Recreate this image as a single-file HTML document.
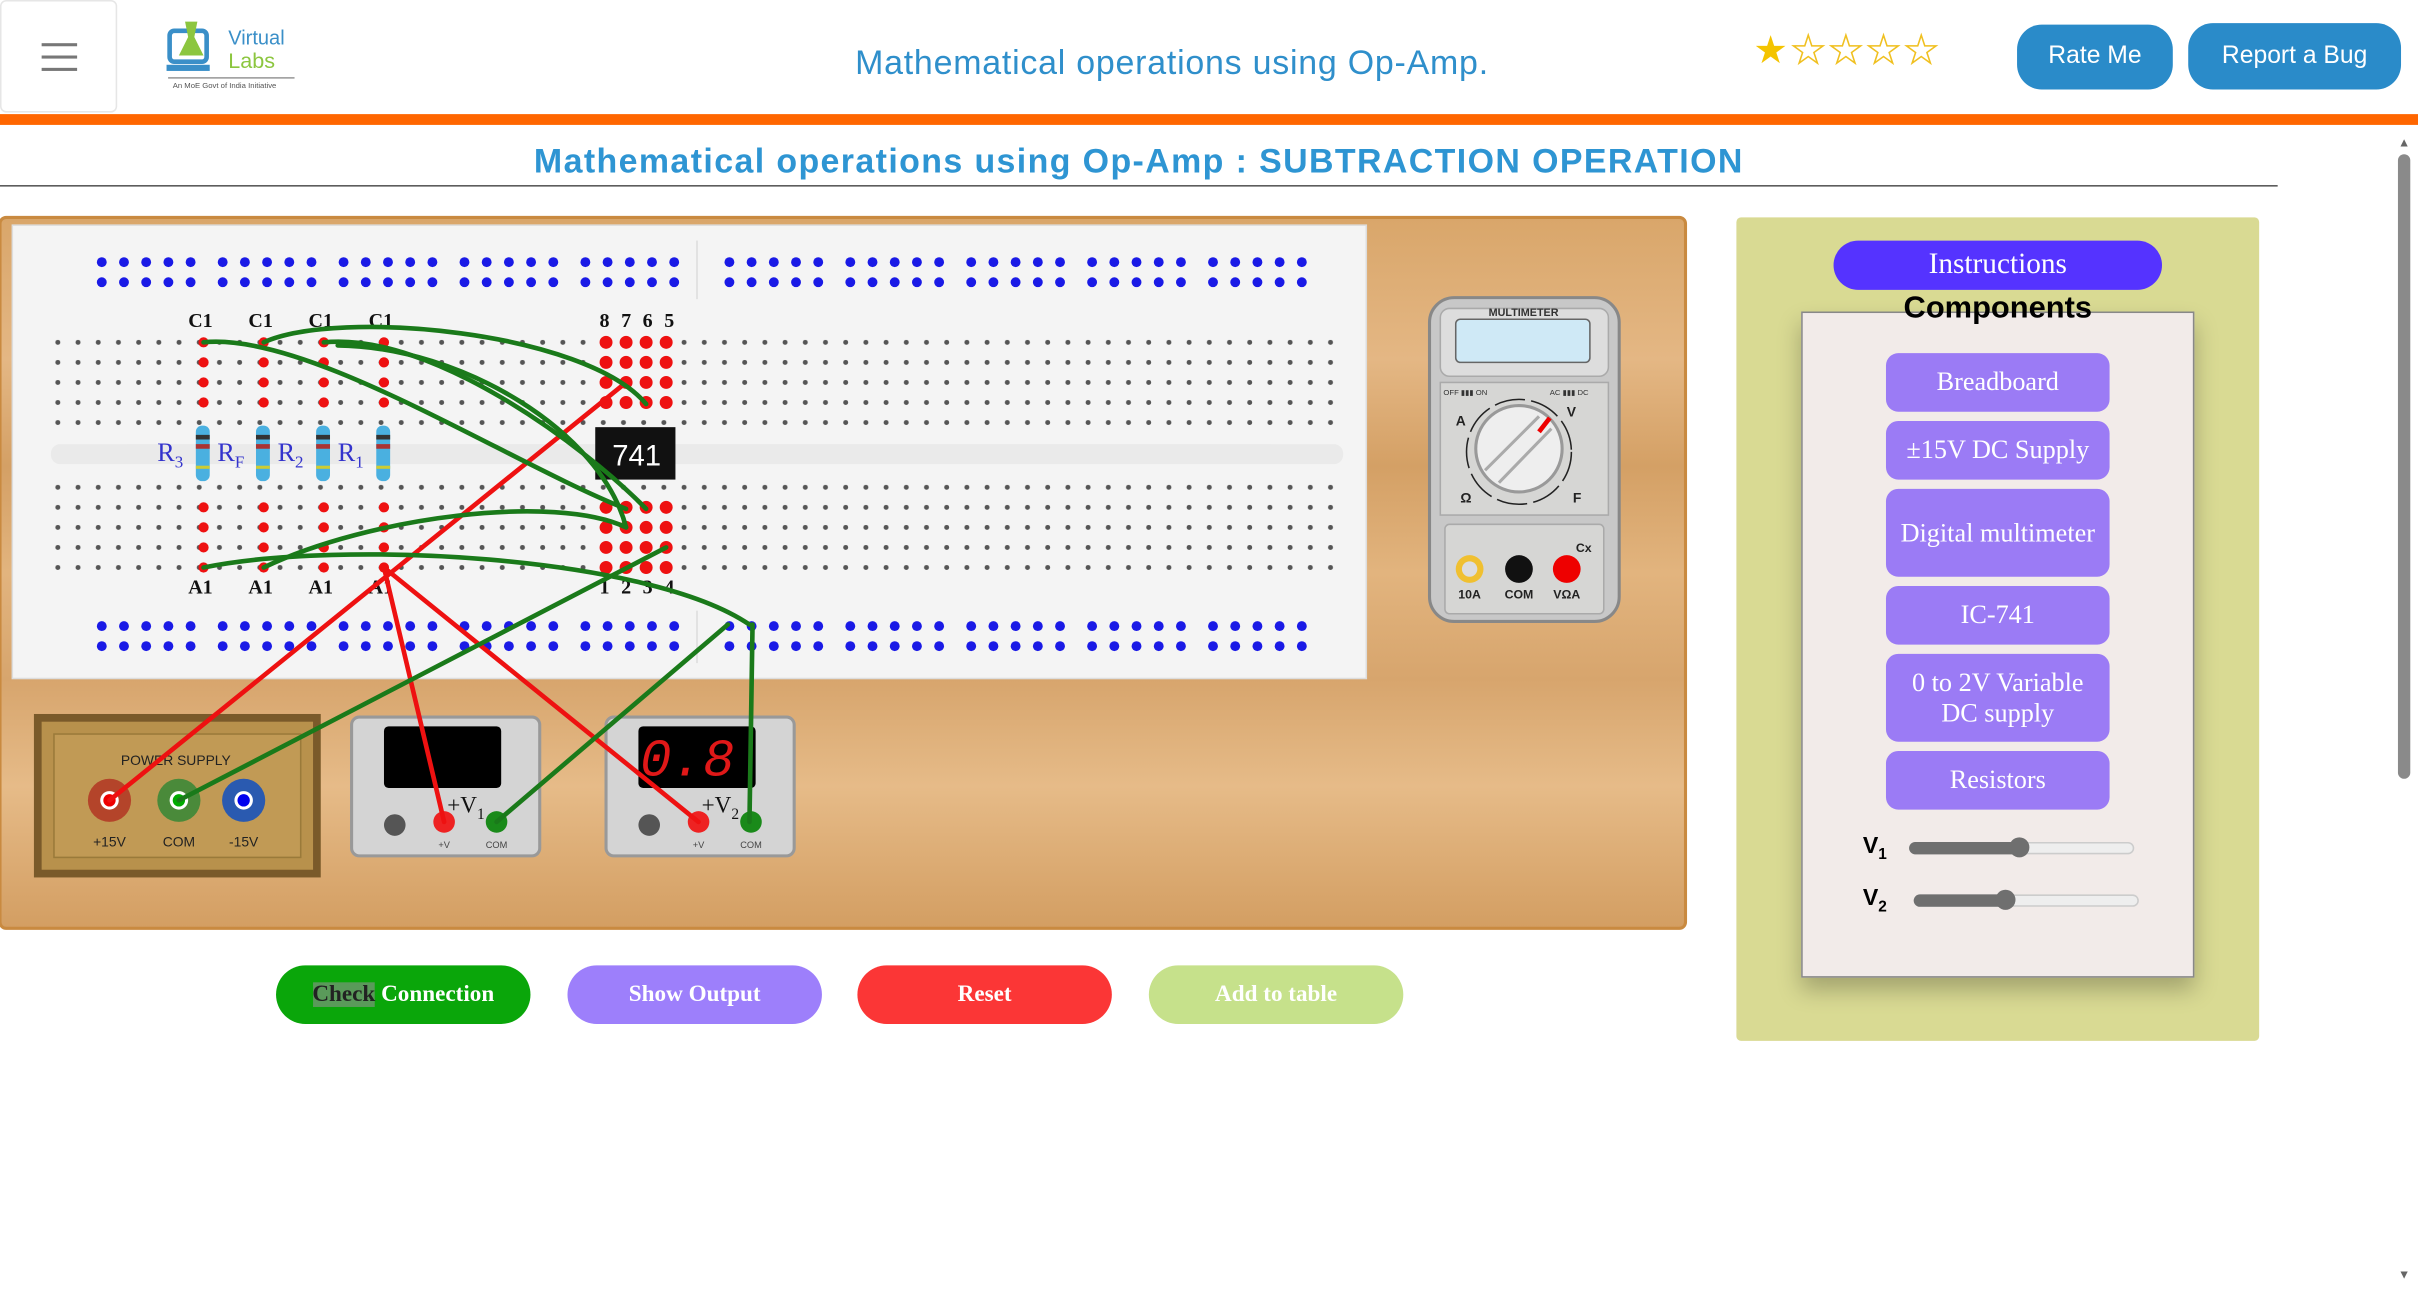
<!DOCTYPE html>
<html><head><meta charset="utf-8">
<style>
html,body{margin:0;padding:0;width:2418px;height:1292px;overflow:hidden;background:#fff;font-family:"Liberation Sans",sans-serif}
#w{position:absolute;left:0;top:0;width:1568px;height:838px;transform:scale(1.54209);transform-origin:0 0}
.a{position:absolute}
.btn{position:absolute;color:#fff;text-align:center;font-family:"Liberation Sans",sans-serif}
.cb{position:absolute;left:1223px;width:145px;background:#9b7bf5;border-radius:8px;color:#fff;font-family:"Liberation Serif",serif;font-size:17px;text-align:center;display:flex;align-items:center;justify-content:center;line-height:20px}
.bb{position:absolute;top:626px;width:165px;height:38px;border-radius:19px;color:#fff;font-family:"Liberation Serif",serif;font-weight:bold;font-size:15px;text-align:center;line-height:38px}
</style></head><body><div id="w">
<div class="a" style="left:0;top:0;width:76px;height:73px;border:1px solid #e6e6e6;border-radius:4px;box-sizing:border-box"></div>
<div class="a" style="left:27px;top:28px;width:23px;height:2px;background:#777"></div>
<div class="a" style="left:27px;top:36px;width:23px;height:2px;background:#777"></div>
<div class="a" style="left:27px;top:44px;width:23px;height:2px;background:#777"></div>
<svg class="a" style="left:106px;top:12px" width="90" height="50" viewBox="0 0 90 50">
<rect x="4" y="8" width="24" height="20" rx="3" fill="none" stroke="#3a8fc8" stroke-width="3"/>
<path d="M14 2 L22 2 L20 12 L26 24 L10 24 L16 12Z" fill="#8cc63f"/>
<rect x="2" y="30" width="28" height="4" fill="#3a8fc8"/>
<text x="42" y="17" font-size="13" fill="#3a8fc8" font-family="Liberation Sans">Virtual</text>
<text x="42" y="32" font-size="14" fill="#8cc63f" font-family="Liberation Sans">Labs</text>
<rect x="3" y="38" width="82" height="1" fill="#999"/>
<text x="6" y="45" font-size="5" fill="#555">An MoE Govt of India Initiative</text>
</svg>
<div class="a" style="left:460px;top:28px;width:600px;text-align:center;font-size:22px;color:#2f8fcb;letter-spacing:0.5px">Mathematical operations using Op-Amp.</div>
<div class="a" style="left:1137px;top:18px;font-size:25px;color:#f4c400;letter-spacing:2px">★<span style="color:#fff;-webkit-text-stroke:1px #f0c020">★★★★</span></div>
<div class="btn" style="left:1308px;top:16px;width:101px;height:42px;background:#2a8bc9;border-radius:16px;line-height:42px;font-size:16px">Rate Me</div>
<div class="btn" style="left:1419px;top:15px;width:138px;height:43px;background:#2a8bc9;border-radius:16px;line-height:43px;font-size:16px">Report a Bug</div>
<div class="a" style="left:0;top:74px;width:1568px;height:7px;background:#ff6600"></div>
<div class="a" style="left:1555px;top:100px;width:8px;height:405px;background:#8a8a8a;border-radius:4px"></div>
<div class="a" style="left:1555px;top:88px;font-size:8px;color:#666">▲</div>
<div class="a" style="left:1555px;top:822px;font-size:8px;color:#666">▼</div>
<div class="a" style="left:0;top:92px;width:1477px;text-align:center;font-size:22px;font-weight:bold;color:#2e95d3;letter-spacing:0.9px">Mathematical operations using Op-Amp : SUBTRACTION OPERATION</div>
<div class="a" style="left:0;top:120px;width:1477px;height:1px;background:#555"></div>

<svg class="a" style="left:0;top:0" width="1100" height="620" viewBox="0 0 1100 620">
<defs>
<linearGradient id="wd" x1="0" y1="0" x2="0" y2="1">
<stop offset="0" stop-color="#d9a66a"/><stop offset=".2" stop-color="#e4b784"/><stop offset=".35" stop-color="#d4a065"/><stop offset=".5" stop-color="#e2b47e"/><stop offset=".65" stop-color="#d7a56d"/><stop offset=".8" stop-color="#e6bb88"/><stop offset="1" stop-color="#d39e62"/>
</linearGradient>
<pattern id="h" x="31" y="216" width="13.1" height="13" patternUnits="userSpaceOnUse"><circle cx="6.5" cy="6" r="1.6" fill="#555"/></pattern>
<g id="bg" fill="#1a1ae6">
<circle cx="0" cy="0" r="3.2"/><circle cx="14.4" cy="0" r="3.2"/><circle cx="28.8" cy="0" r="3.2"/><circle cx="43.2" cy="0" r="3.2"/><circle cx="57.6" cy="0" r="3.2"/>
<circle cx="0" cy="13" r="3.2"/><circle cx="14.4" cy="13" r="3.2"/><circle cx="28.8" cy="13" r="3.2"/><circle cx="43.2" cy="13" r="3.2"/><circle cx="57.6" cy="13" r="3.2"/>
</g>
<g id="row5"><use href="#bg" x="66"/><use href="#bg" x="144.4"/><use href="#bg" x="222.8"/><use href="#bg" x="301.2"/><use href="#bg" x="379.6"/></g>
</defs>
<rect x="0" y="141" width="1093" height="461" rx="4" fill="url(#wd)" stroke="#c98a40" stroke-width="2"/>
<rect x="8" y="146" width="878" height="294" fill="#f4f4f4" stroke="#ddd"/>
<rect x="33" y="288" width="838" height="13" rx="6" fill="#eaeaea"/>
<line x1="452" y1="156" x2="452" y2="194" stroke="#ddd"/><line x1="452" y1="396" x2="452" y2="430" stroke="#ddd"/>
<rect x="31" y="216" width="840" height="65" fill="url(#h)"/>
<rect x="31" y="216" width="840" height="65" fill="url(#h)" transform="translate(0,94)"/>
<use href="#row5" y="170"/><use href="#row5" y="406"/>
<use href="#row5" x="407" y="170"/><use href="#row5" x="407" y="406"/>
<g fill="#ee1111">
<g id="rc"><circle cx="132" cy="222" r="3.3"/><circle cx="132" cy="235" r="3.3"/><circle cx="132" cy="248" r="3.3"/><circle cx="132" cy="261" r="3.3"/><circle cx="132" cy="329" r="3.3"/><circle cx="132" cy="342" r="3.3"/><circle cx="132" cy="355" r="3.3"/><circle cx="132" cy="368" r="3.3"/></g>
<use href="#rc" x="39"/><use href="#rc" x="78"/><use href="#rc" x="117"/>
<g id="ic"><circle cx="393" cy="222" r="4.2"/><circle cx="393" cy="235" r="4.2"/><circle cx="393" cy="248" r="4.2"/><circle cx="393" cy="261" r="4.2"/><circle cx="393" cy="329" r="4.2"/><circle cx="393" cy="342" r="4.2"/><circle cx="393" cy="355" r="4.2"/><circle cx="393" cy="368" r="4.2"/></g>
<use href="#ic" x="13"/><use href="#ic" x="26"/><use href="#ic" x="39"/>
</g>
<g font-family="Liberation Serif" font-weight="bold" font-size="13" fill="#111" text-anchor="middle">
<text x="130" y="212">C1</text><text x="169" y="212">C1</text><text x="208" y="212">C1</text><text x="247" y="212">C1</text>
<text x="130" y="385">A1</text><text x="169" y="385">A1</text><text x="208" y="385">A1</text><text x="247" y="385">A1</text>
<text x="392" y="212">8</text><text x="406" y="212">7</text><text x="420" y="212">6</text><text x="434" y="212">5</text>
<text x="392" y="385">1</text><text x="406" y="385">2</text><text x="420" y="385">3</text><text x="434" y="385">4</text>
</g>
<g id="res"><rect x="127" y="276" width="9" height="36" rx="4" fill="#4ab0e0"/><rect x="127" y="282" width="9" height="3" fill="#333"/><rect x="127" y="288" width="9" height="3" fill="#a33"/><rect x="127" y="302" width="9" height="2" fill="#cc3"/></g>
<use href="#res" x="39"/><use href="#res" x="78"/><use href="#res" x="117"/>
<g font-family="Liberation Serif" font-size="17" fill="#3333cc">
<text x="102" y="299">R<tspan font-size="11" dy="4">3</tspan></text>
<text x="141" y="299">R<tspan font-size="11" dy="4">F</tspan></text>
<text x="180" y="299">R<tspan font-size="11" dy="4">2</tspan></text>
<text x="219" y="299">R<tspan font-size="11" dy="4">1</tspan></text>
</g>
<rect x="386" y="277" width="52" height="34" fill="#111"/>
<text x="397" y="302" font-size="19" fill="#fff" font-family="Liberation Sans">741</text>
<rect x="22" y="463" width="186" height="106" fill="#7a5a2a"/>
<rect x="27" y="468" width="176" height="96" fill="#b8914c"/>
<rect x="35" y="476" width="160" height="80" fill="#c19a55" stroke="#9a7a3a"/>
<text x="114" y="496" font-size="9" text-anchor="middle" fill="#222">POWER SUPPLY</text>
<circle cx="71" cy="519" r="14" fill="#b4442a"/><circle cx="71" cy="519" r="6" fill="#fff"/><circle cx="71" cy="519" r="4" fill="#e00"/>
<circle cx="116" cy="519" r="14" fill="#4a8a3a"/><circle cx="116" cy="519" r="6" fill="#fff"/><circle cx="116" cy="519" r="4" fill="#0a0"/>
<circle cx="158" cy="519" r="14" fill="#2a5ab0"/><circle cx="158" cy="519" r="6" fill="#fff"/><circle cx="158" cy="519" r="4" fill="#00e"/>
<g font-size="9" fill="#222" text-anchor="middle"><text x="71" y="549">+15V</text><text x="116" y="549">COM</text><text x="158" y="549">-15V</text></g>
<g id="vs"><rect x="228" y="465" width="122" height="90" rx="5" fill="#d4d4d4" stroke="#999" stroke-width="2"/><rect x="249" y="471" width="76" height="40" rx="3" fill="#000"/>
<circle cx="256" cy="535" r="7" fill="#555"/><circle cx="288" cy="533" r="7" fill="#e22"/><circle cx="322" cy="533" r="7" fill="#1a8a1a"/>
<text x="288" y="550" font-size="6" text-anchor="middle" fill="#444">+V</text><text x="322" y="550" font-size="6" text-anchor="middle" fill="#444">COM</text></g>
<use href="#vs" x="165"/>
<text x="290" y="527" font-family="Liberation Serif" font-size="15" fill="#111">+V<tspan font-size="10" dy="4">1</tspan></text>
<text x="455" y="527" font-family="Liberation Serif" font-size="15" fill="#111">+V<tspan font-size="10" dy="4">2</tspan></text>
<text x="415" y="503" font-family="Liberation Mono" font-style="italic" font-size="34" fill="#e01818">0.8</text>
<rect x="927" y="193" width="123" height="210" rx="16" fill="#c8c8c8" stroke="#888" stroke-width="2"/>
<rect x="934" y="200" width="109" height="44" rx="6" fill="#ddd" stroke="#aaa"/>
<text x="988" y="205" font-size="7" font-weight="bold" text-anchor="middle" fill="#333">MULTIMETER</text>
<rect x="944" y="207" width="87" height="28" rx="3" fill="#cfe9f6" stroke="#666"/>
<rect x="934" y="248" width="109" height="86" fill="#d6d6d4" stroke="#aaa"/>
<text x="936" y="256" font-size="5" fill="#333">OFF ▮▮▮ ON</text><text x="1005" y="256" font-size="5" fill="#333">AC ▮▮▮ DC</text>
<circle cx="985" cy="293" r="34" fill="none" stroke="#222" stroke-width="1" stroke-dasharray="20 4"/>
<circle cx="985" cy="291" r="28" fill="#eee" stroke="#999" stroke-width="2"/>
<line x1="963" y1="305" x2="998" y2="270" stroke="#aaa" stroke-width="2"/><line x1="972" y1="313" x2="1006" y2="278" stroke="#aaa" stroke-width="2"/>
<path d="M998 280 L1005 271" stroke="#e00" stroke-width="3"/>
<g font-size="9" font-weight="bold" fill="#222"><text x="944" y="276">A</text><text x="1016" y="270">V</text><text x="947" y="326">Ω</text><text x="1020" y="326">F</text></g>
<rect x="937" y="340" width="103" height="58" rx="3" fill="#d6d6d4" stroke="#aaa"/>
<circle cx="953" cy="369" r="9" fill="#f0c030"/><circle cx="953" cy="369" r="5" fill="#ddd"/>
<circle cx="985" cy="369" r="9" fill="#111"/><circle cx="1016" cy="369" r="9" fill="#e00"/>
<g font-size="8" font-weight="bold" fill="#222" text-anchor="middle"><text x="953" y="388">10A</text><text x="985" y="388">COM</text><text x="1016" y="388">VΩA</text><text x="1027" y="358">Cx</text></g>
<g fill="none" stroke-width="3" stroke-linecap="round">
<path d="M71 519 L406 248" stroke="#ee1111"/>
<path d="M249 368 L288 533" stroke="#ee1111"/>
<path d="M249 368 L453 533" stroke="#ee1111"/>
<path d="M132 222 C200 215 330 300 406 330" stroke="#1a7a1a"/>
<path d="M171 222 C220 200 380 215 419 262" stroke="#1a7a1a"/>
<path d="M210 222 C280 215 380 290 419 330" stroke="#1a7a1a"/>
<path d="M219 224 C300 225 390 280 406 342" stroke="#1a7a1a"/>
<path d="M132 368 C220 350 420 360 486 405" stroke="#1a7a1a"/>
<path d="M171 368 C240 335 360 320 406 342" stroke="#1a7a1a"/>
<path d="M116 519 L432 355" stroke="#1a7a1a"/>
<path d="M322 533 L472 405" stroke="#1a7a1a"/>
<path d="M486 533 L488 405" stroke="#1a7a1a"/>
</g>
</svg>

<div class="a" style="left:1126px;top:141px;width:339px;height:534px;background:#d9da93;border-radius:3px"></div>
<div class="a" style="left:1189px;top:156px;width:213px;height:32px;background:#5533ff;border-radius:16px;color:#fff;font-family:'Liberation Serif',serif;font-size:19px;text-align:center;line-height:32px">Instructions</div>
<div class="a" style="left:1168px;top:202px;width:255px;height:432px;background:#f2ebe9;border:1px solid #888;box-sizing:border-box;box-shadow:0 8px 14px rgba(0,0,0,.25)"></div>
<div class="a" style="left:1168px;top:189px;width:255px;text-align:center;font-size:20px;font-weight:bold;color:#000">Components</div>
<div class="cb" style="top:229px;height:38px">Breadboard</div>
<div class="cb" style="top:273px;height:38px">±15V DC Supply</div>
<div class="cb" style="top:317px;height:57px">Digital multimeter</div>
<div class="cb" style="top:380px;height:38px">IC-741</div>
<div class="cb" style="top:424px;height:57px">0 to 2V Variable<br>DC supply</div>
<div class="cb" style="top:487px;height:38px">Resistors</div>
<div class="a" style="left:1208px;top:540px;font-size:15px;font-weight:bold">V<sub style="font-size:10px">1</sub></div>
<div class="a" style="left:1208px;top:574px;font-size:15px;font-weight:bold">V<sub style="font-size:10px">2</sub></div>
<div class="a" style="left:1238px;top:546px;width:144px;height:6px;background:#eee;border:1px solid #ccc;border-radius:4px"></div>
<div class="a" style="left:1238px;top:546px;width:72px;height:8px;background:#6f6f6f;border-radius:4px"></div>
<div class="a" style="left:1303px;top:543px;width:13px;height:13px;background:#6f6f6f;border-radius:50%"></div>
<div class="a" style="left:1241px;top:580px;width:144px;height:6px;background:#eee;border:1px solid #ccc;border-radius:4px"></div>
<div class="a" style="left:1241px;top:580px;width:60px;height:8px;background:#6f6f6f;border-radius:4px"></div>
<div class="a" style="left:1294px;top:577px;width:13px;height:13px;background:#6f6f6f;border-radius:50%"></div>

<div class="bb" style="left:179px;background:#0aa60a"><span style="background:#5a9a5a;color:#222">Check</span> Connection</div>
<div class="bb" style="left:368px;background:#9d7ffb">Show Output</div>
<div class="bb" style="left:556px;background:#fb3636">Reset</div>
<div class="bb" style="left:745px;background:#c6e18b">Add to table</div>
</div></body></html>
